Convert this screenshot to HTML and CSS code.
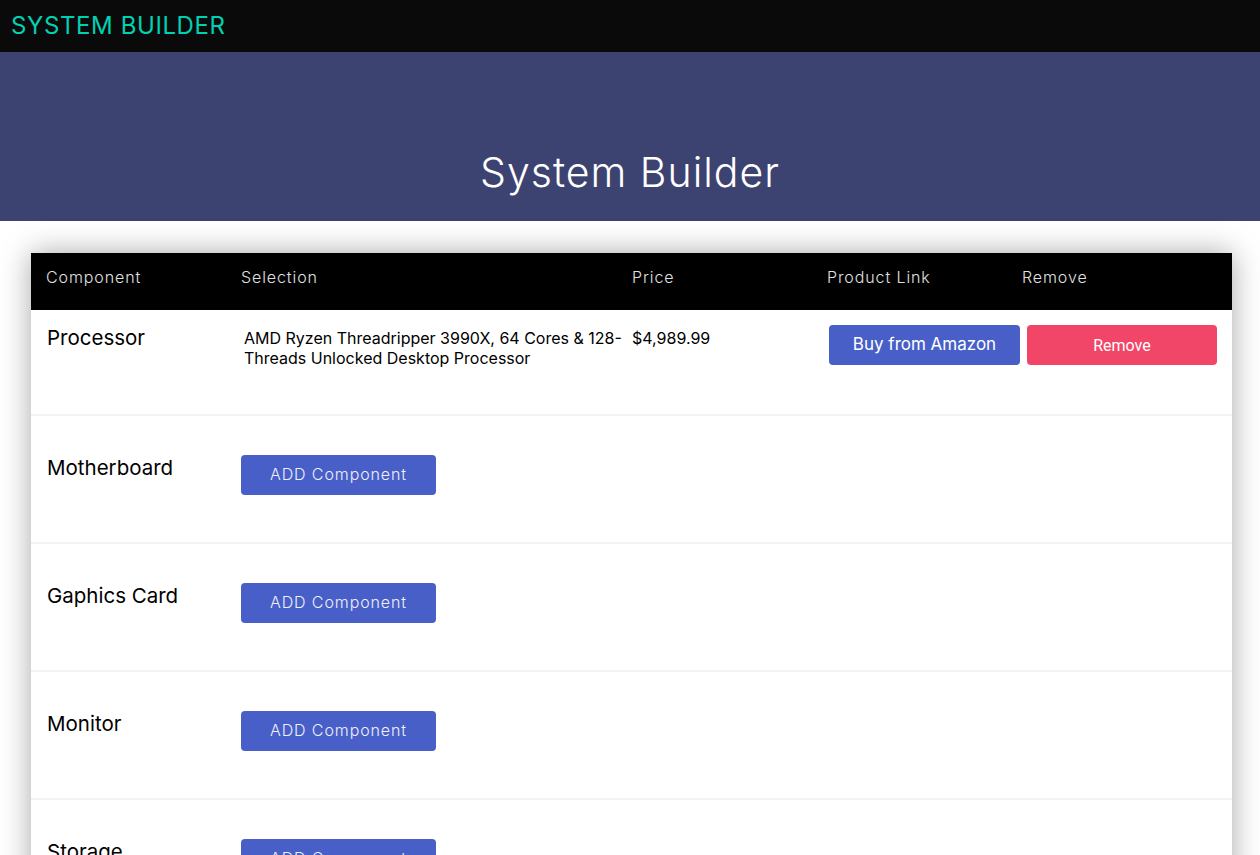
FILE: index.html
```html
<!DOCTYPE html>
<html lang="en">
<head>
<meta charset="utf-8">
<title>System Builder</title>
<link rel="stylesheet" href="styles.css">
</head>
<body>
<nav class="navbar">
  <a class="brand" href="#">SYSTEM BUILDER</a>
</nav>
<section class="hero">
  <h1 class="hero-title">System Builder</h1>
</section>
<main class="builder">
  <div class="row head">
    <div class="cell">Component</div>
    <div class="cell">Selection</div>
    <div class="cell">Price</div>
    <div class="cell">Product Link</div>
    <div class="cell">Remove</div>
  </div>
  <div class="row item first">
    <div class="cell label">Processor</div>
    <div class="cell selection">AMD Ryzen Threadripper 3990X, 64 Cores &amp; 128-Threads Unlocked Desktop Processor</div>
    <div class="cell price">$4,989.99</div>
    <div class="cell link"><a class="btn buy" href="#">Buy from Amazon</a></div>
    <div class="cell rm"><button class="btn remove">Remove</button></div>
  </div>
  <div class="row item">
    <div class="cell label">Motherboard</div>
    <div class="cell"><a class="btn add" href="#">ADD Component</a></div>
  </div>
  <div class="row item">
    <div class="cell label">Gaphics Card</div>
    <div class="cell"><a class="btn add" href="#">ADD Component</a></div>
  </div>
  <div class="row item">
    <div class="cell label">Monitor</div>
    <div class="cell"><a class="btn add" href="#">ADD Component</a></div>
  </div>
  <div class="row item">
    <div class="cell label">Storage</div>
    <div class="cell"><a class="btn add" href="#">ADD Component</a></div>
  </div>
</main>
</body>
</html>
```

FILE: styles.css
```css
* { box-sizing: border-box; }
body {
  margin: 0;
  background: #fff;
  font-family: "Inter", "DejaVu Sans", sans-serif;
  color: #000;
}
.navbar {
  height: 52px;
  background: #0a0a0a;
  display: flex;
  align-items: center;
  padding-left: 11px;
  padding-bottom: 2px;
}
.brand {
  color: #00d1b2;
  font-size: 24px;
  font-weight: 400;
  text-decoration: none;
  letter-spacing: 0.6px;
}
.hero {
  height: 169px;
  background: #3d4370;
  display: flex;
  justify-content: center;
  align-items: flex-end;
  padding-bottom: 24px;
}
.hero-title {
  margin: 0;
  color: #fff;
  font-size: 41px;
  font-weight: 300;
  line-height: 1.2;
  letter-spacing: 1px;
}
.builder {
  margin: 32px 28px 0 31px;
  box-shadow: 0 0 28px rgba(0, 0, 0, 0.35);
  background: #fff;
}
.row {
  display: grid;
  grid-template-columns: 195px 391px 195px 195px 1fr;
}
.head {
  height: 57px;
  background: #000;
  color: #e0e0e0;
  font-weight: 300;
  font-size: 16px;
  letter-spacing: 0.9px;
  align-items: center;
  padding-bottom: 9px;
}
.head .cell { padding-left: 15px; }
.item {
  height: 128px;
  padding-top: 39px;
  border-top: 2px solid #f3f3f3;
  align-items: start;
}
.item.first {
  height: 104px;
  padding-top: 15px;
  border-top: none;
}
.label {
  padding-left: 16px;
  font-size: 20.5px;
  line-height: 24px;
  padding-top: 1px;
}
.item .cell:nth-child(2) { padding-left: 15px; }
.selection {
  padding-left: 18px !important;
  padding-right: 0;
  font-size: 16px;
  line-height: 20px;
  padding-top: 3px;
  margin-right: -6px;
}
.price {
  padding-left: 15px;
  font-size: 16px;
  line-height: 20px;
  padding-top: 3px;
}
.link { padding-left: 17px; }
.rm { padding-left: 20px; }
.btn {
  display: flex;
  align-items: center;
  justify-content: center;
  height: 40px;
  border-radius: 4px;
  border: none;
  color: #fff;
  text-decoration: none;
  font-family: inherit;
}
.buy {
  width: 191px;
  background: #485fc7;
  font-size: 17px;
  font-weight: 400;
  padding-bottom: 2px;
}
.remove {
  width: 190px;
  background: #f14668;
  font-family: "Roboto", sans-serif;
  font-size: 16px;
  font-weight: 400;
  padding-top: 2px;
}
.add {
  width: 195px;
  background: #485fc7;
  font-size: 16px;
  font-weight: 300;
  letter-spacing: 0.9px;
  color: #eef0fb;
  padding-bottom: 2px;
}
```
